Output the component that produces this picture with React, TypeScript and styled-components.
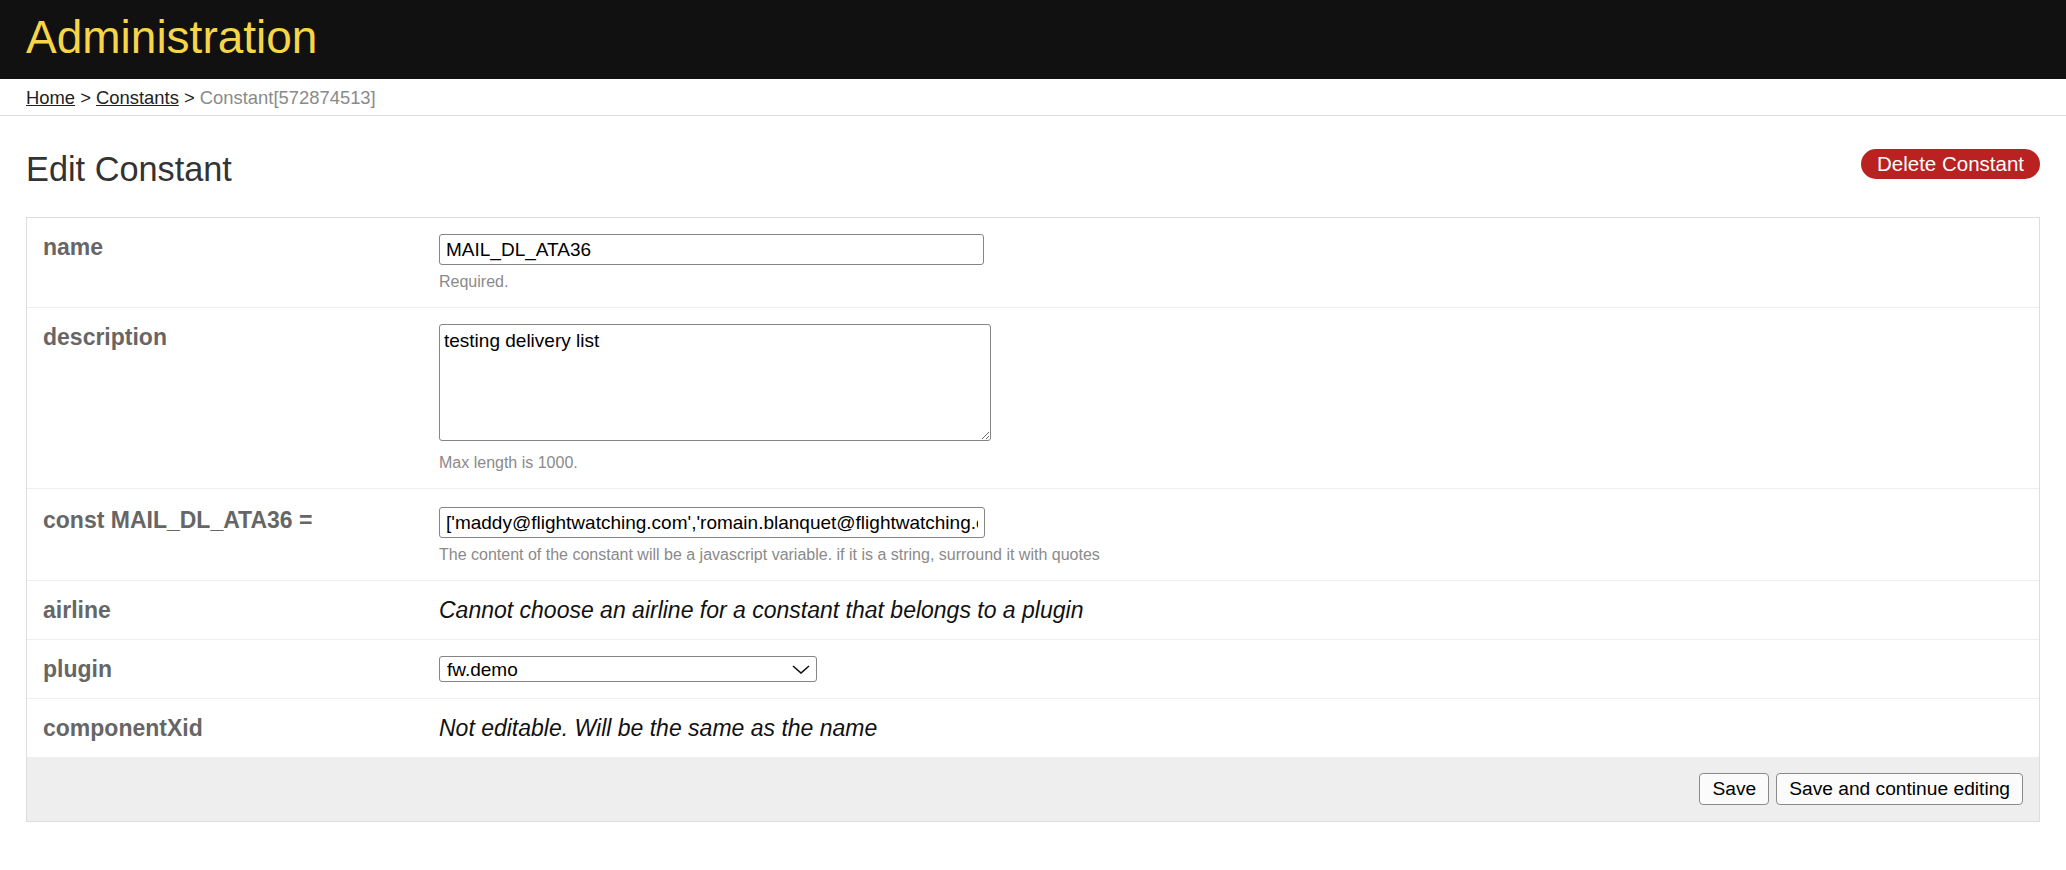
import React from "react";
import styled, { createGlobalStyle } from "styled-components";

const GlobalStyle = createGlobalStyle`
  html, body {
    margin: 0;
    padding: 0;
    background: #ffffff;
  }
  body {
    font-family: "Liberation Sans", Arial, Helvetica, sans-serif;
    color: #333333;
  }
  * { box-sizing: border-box; }
`;

const Header = styled.header`
  background: #111111;
  padding: 11px 26px 15px;
`;

const Brand = styled.h1`
  margin: 0;
  font-size: 46px;
  font-weight: 400;
  line-height: 53px;
  color: #f7d548;
`;

const Breadcrumbs = styled.nav`
  padding: 8px 26px 7px;
  border-bottom: 1px solid #dddddd;
  font-size: 18.4px;
  line-height: 21px;
  color: #222222;
`;

const Crumb = styled.a`
  color: #222222;
  text-decoration: underline;
`;

const Current = styled.span`
  color: #8a8a8a;
`;

const Content = styled.main`
  padding: 34px 26px 0;
`;

const TitleRow = styled.div`
  display: flex;
  justify-content: space-between;
  align-items: flex-start;
`;

const Title = styled.h2`
  margin: 0;
  font-size: 34.3px;
  font-weight: 400;
  line-height: 39px;
  color: #333333;
`;

const DeleteLink = styled.a`
  display: inline-block;
  margin-top: -1px;
  background: #ba2121;
  color: #ffffff;
  font-size: 20.5px;
  line-height: 24px;
  padding: 3px 16px;
  border-radius: 15px;
  text-decoration: none;
`;

const Fieldset = styled.form`
  margin-top: 28px;
  border: 1px solid #dddddd;
`;

const Row = styled.div<{ $top?: number }>`
  display: grid;
  grid-template-columns: 396px 1fr;
  padding: ${(p) => p.$top ?? 16}px 16px 16px;
  & + & {
    border-top: 1px solid #eeeeee;
  }
`;

const Label = styled.label`
  font-size: 23px;
  font-weight: 700;
  line-height: 26px;
  color: #666666;
`;

const Field = styled.div`
  display: flex;
  flex-direction: column;
  align-items: flex-start;
`;

const TextInput = styled.input<{ $width: number }>`
  width: ${(p) => p.$width}px;
  height: 31px;
  padding: 0 6px;
  border: 1px solid #858585;
  border-radius: 3px;
  font-family: inherit;
  font-size: 19px;
  color: #000000;
  background: #ffffff;
  outline: none;
`;

const TextArea = styled.textarea`
  display: block;
  width: 552px;
  height: 117px;
  margin-bottom: 5px;
  padding: 5px 4px;
  border: 1px solid #858585;
  border-radius: 3px;
  font-family: inherit;
  font-size: 19px;
  line-height: normal;
  color: #000000;
  background: #ffffff;
  outline: none;
`;

const Help = styled.div`
  margin-top: 7px;
  font-size: 16px;
  line-height: 19px;
  color: #8a8a8a;
`;

const Note = styled.div`
  font-size: 23px;
  font-style: italic;
  line-height: 26px;
  color: #111111;
`;

const SelectWrap = styled.div`
  position: relative;
  width: 378px;
  height: 26px;
`;

const Select = styled.select`
  width: 100%;
  height: 26px;
  padding: 0 30px 0 7px;
  border: 1px solid #858585;
  border-radius: 3px;
  font-family: inherit;
  font-size: 19px;
  color: #000000;
  background: #ffffff;
  appearance: none;
  -webkit-appearance: none;
  outline: none;
`;

const Chevron = styled.svg`
  position: absolute;
  right: 7px;
  top: 9px;
  pointer-events: none;
`;

const Footer = styled.div`
  display: flex;
  justify-content: flex-end;
  gap: 7px;
  background: #eeeeee;
  padding: 16px 16px 16px;
`;

const Button = styled.button`
  height: 32px;
  padding: 0 12px;
  border: 1px solid #8a8a8a;
  border-radius: 4px;
  background: #fbfbfb;
  font-family: inherit;
  font-size: 19.2px;
  color: #000000;
`;

export default function App() {
  return (
    <>
      <GlobalStyle />
      <Header>
        <Brand>Administration</Brand>
      </Header>
      <Breadcrumbs>
        <Crumb href="#">Home</Crumb> &gt; <Crumb href="#">Constants</Crumb> &gt;{" "}
        <Current>Constant[572874513]</Current>
      </Breadcrumbs>
      <Content>
        <TitleRow>
          <Title>Edit Constant</Title>
          <DeleteLink href="#">Delete Constant</DeleteLink>
        </TitleRow>
        <Fieldset onSubmit={(e) => e.preventDefault()}>
          <Row>
            <Label>name</Label>
            <Field>
              <TextInput $width={545} defaultValue="MAIL_DL_ATA36" />
              <Help>Required.</Help>
            </Field>
          </Row>
          <Row>
            <Label>description</Label>
            <Field>
              <TextArea defaultValue="testing delivery list" />
              <Help>Max length is 1000.</Help>
            </Field>
          </Row>
          <Row $top={18}>
            <Label>const MAIL_DL_ATA36 =</Label>
            <Field>
              <TextInput
                $width={546}
                defaultValue="['maddy@flightwatching.com','romain.blanquet@flightwatching.com']"
              />
              <Help>
                The content of the constant will be a javascript variable. if it is a string, surround it with quotes
              </Help>
            </Field>
          </Row>
          <Row>
            <Label>airline</Label>
            <Note>Cannot choose an airline for a constant that belongs to a plugin</Note>
          </Row>
          <Row>
            <Label>plugin</Label>
            <Field>
              <SelectWrap>
                <Select defaultValue="fw.demo">
                  <option value="fw.demo">fw.demo</option>
                </Select>
                <Chevron width="18" height="9" viewBox="0 0 18 9">
                  <polyline points="1,1 9,8 17,1" fill="none" stroke="#111" strokeWidth="1.6" />
                </Chevron>
              </SelectWrap>
            </Field>
          </Row>
          <Row>
            <Label>componentXid</Label>
            <Note>Not editable. Will be the same as the name</Note>
          </Row>
          <Footer>
            <Button type="submit">Save</Button>
            <Button type="submit">Save and continue editing</Button>
          </Footer>
        </Fieldset>
      </Content>
    </>
  );
}
